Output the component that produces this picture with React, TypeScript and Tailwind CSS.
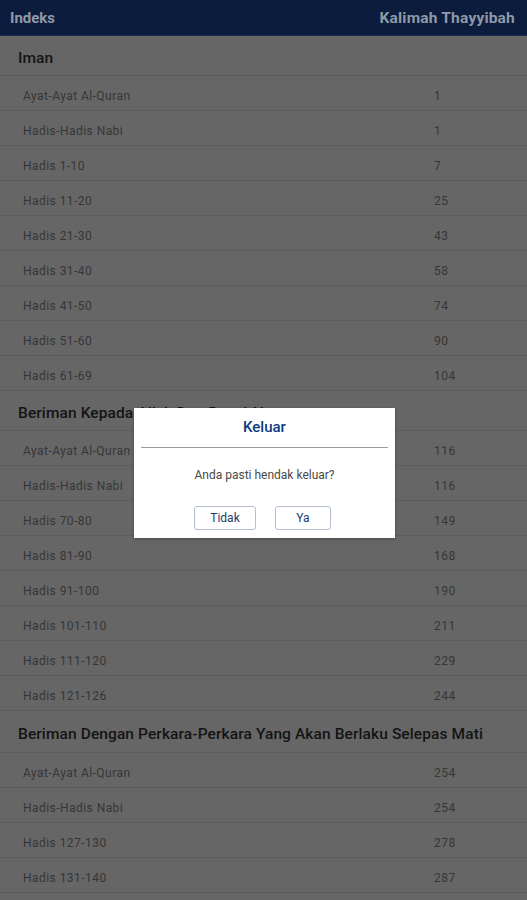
import React from "react";

type Row = { label: string; page: number };
type Section = { title: string; h: string; rows: Row[] };

const sections: Section[] = [
  {
    title: "Iman",
    h: "h-[40px]",
    rows: [
      { label: "Ayat-Ayat Al-Quran", page: 1 },
      { label: "Hadis-Hadis Nabi", page: 1 },
      { label: "Hadis 1-10", page: 7 },
      { label: "Hadis 11-20", page: 25 },
      { label: "Hadis 21-30", page: 43 },
      { label: "Hadis 31-40", page: 58 },
      { label: "Hadis 41-50", page: 74 },
      { label: "Hadis 51-60", page: 90 },
      { label: "Hadis 61-69", page: 104 },
    ],
  },
  {
    title: "Beriman Kepada Allah Dan Rasul-Nya",
    h: "h-[40px]",
    rows: [
      { label: "Ayat-Ayat Al-Quran", page: 116 },
      { label: "Hadis-Hadis Nabi", page: 116 },
      { label: "Hadis 70-80", page: 149 },
      { label: "Hadis 81-90", page: 168 },
      { label: "Hadis 91-100", page: 190 },
      { label: "Hadis 101-110", page: 211 },
      { label: "Hadis 111-120", page: 229 },
      { label: "Hadis 121-126", page: 244 },
    ],
  },
  {
    title: "Beriman Dengan Perkara-Perkara Yang Akan Berlaku Selepas Mati",
    h: "h-[42px]",
    rows: [
      { label: "Ayat-Ayat Al-Quran", page: 254 },
      { label: "Hadis-Hadis Nabi", page: 254 },
      { label: "Hadis 127-130", page: 278 },
      { label: "Hadis 131-140", page: 287 },
    ],
  },
];

export default function App() {
  return (
    <div className="relative w-[527px] h-[900px] overflow-hidden bg-[#666666] font-['Roboto','Liberation_Sans',sans-serif]">
      {/* top bar */}
      <div className="h-9 bg-[#0c1c3c] border-b border-[#1c2c4a] flex items-center justify-between pl-[10px] pr-[12px]">
        <span className="text-[15px] font-bold text-[#8e99a8] pt-[2px]">Indeks</span>
        <span className="text-[15.5px] font-bold text-[#8e99a8] pt-[2px] tracking-[0.2px]">Kalimah Thayyibah</span>
      </div>

      {sections.map((s) => (
        <div key={s.title}>
          <div className={`${s.h} flex items-center pl-[18px] border-b border-[#5d5d5d]`}>
            <span className="pt-[6px] text-[15.5px] font-medium text-[#141414] tracking-[0.1px]">{s.title}</span>
          </div>
          {s.rows.map((r) => (
            <div key={r.label} className="h-[35px] flex items-center border-b border-[#5d5d5d]">
              <span className="w-[434px] pl-[23px] pt-[6px] text-[12px] tracking-[0.45px] text-[#363636]">{r.label}</span>
              <span className="pt-[6px] text-[12px] tracking-[0.45px] text-[#363636]">{r.page}</span>
            </div>
          ))}
        </div>
      ))}

      {/* exit dialog */}
      <div className="absolute left-[134px] top-[408px] w-[261px] h-[130px] bg-white flex flex-col items-center shadow-[0_1px_3px_rgba(0,0,0,0.3)]">
        <div className="h-[39px] flex items-center text-[15px] font-medium text-[#0d3a80]">Keluar</div>
        <div className="w-[247px] h-px bg-[#9c9c9c]" />
        <div className="mt-[18px] text-[12px] text-[#4a4a4a]">Anda pasti hendak keluar?</div>
        <div className="mt-[22px] mr-[4px] flex gap-[19px]">
          <button className="w-[62px] h-[24px] rounded-[3px] border border-[#b3bfcf] text-[12px] text-[#1d3a6b]">Tidak</button>
          <button className="w-[56px] h-[24px] rounded-[3px] border border-[#b3bfcf] text-[12px] text-[#1d3a6b]">Ya</button>
        </div>
      </div>
    </div>
  );
}
